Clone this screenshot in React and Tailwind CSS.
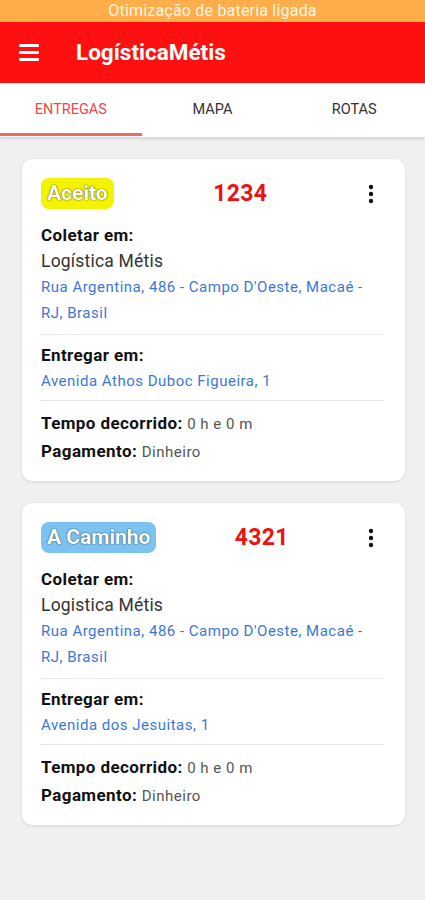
import React from "react";

const entregas = [
  {
    status: "Aceito",
    badge: "bg-[#f4f400]",
    numero: "1234",
    coletaNome: "Logística Métis",
    coletaEndereco: "Rua Argentina, 486 - Campo D'Oeste, Macaé - RJ, Brasil",
    entregaEndereco: "Avenida Athos Duboc Figueira, 1",
  },
  {
    status: "A Caminho",
    badge: "bg-[#7cc3f2]",
    numero: "4321",
    coletaNome: "Logistica Métis",
    coletaEndereco: "Rua Argentina, 486 - Campo D'Oeste, Macaé - RJ, Brasil",
    entregaEndereco: "Avenida dos Jesuitas, 1",
  },
];

const Kebab = () => (
  <svg width="8" height="20" viewBox="0 0 8 20" className="shrink-0">
    <circle cx="4" cy="3" r="2.2" fill="#111" />
    <circle cx="4" cy="10" r="2.2" fill="#111" />
    <circle cx="4" cy="17" r="2.2" fill="#111" />
  </svg>
);

const EntregaCard = ({ item }) => {
  return (
    <div className="bg-white rounded-[10px] shadow-[0_1px_3px_rgba(0,0,0,0.12)] pl-[19px] pr-[21px] pt-[19px] pb-[15px]">
      <div className="flex items-center justify-between pr-[9px] h-[31px]">
        <span
          className={`${item.badge} rounded-[8px] h-[31px] px-[6px] flex items-center text-white font-bold text-[21px] leading-none [text-shadow:0_0_1px_rgba(0,0,0,0.7),0_0_2px_rgba(0,0,0,0.4)]`}
        >
          {item.status}
        </span>
        <span className="text-[#ee1111] font-bold text-[23px] leading-none tracking-[0.3px]">
          {item.numero}
        </span>
        <Kebab />
      </div>

      <div className="mt-[13px] text-[17px] leading-[26px] font-bold tracking-[0.4px] text-[#111]">
        Coletar em:
      </div>
      <div className="text-[17.5px] leading-[26px] tracking-[0.2px] text-[#333]">
        {item.coletaNome}
      </div>
      <div className="text-[15px] leading-[26px] tracking-[0.5px] text-[#3b78d6] pr-[16px]">
        {item.coletaEndereco}
      </div>

      <div className="mt-[8px] h-px bg-[#e6e6e6]" />

      <div className="mt-[7px] text-[17px] leading-[26px] font-bold tracking-[0.4px] text-[#111]">
        Entregar em:
      </div>
      <div className="text-[15px] leading-[26px] tracking-[0.5px] text-[#3b78d6]">
        {item.entregaEndereco}
      </div>

      <div className="mt-[6px] h-px bg-[#e6e6e6]" />

      <div className="mt-[9px] leading-[27px] text-[#111]">
        <span className="text-[17px] font-bold tracking-[0.4px]">Tempo decorrido: </span>
        <span className="text-[15px] tracking-[0.5px] text-[#555]">0 h e 0 m</span>
      </div>
      <div className="leading-[27px] text-[#111]">
        <span className="text-[17px] font-bold tracking-[0.4px]">Pagamento: </span>
        <span className="text-[15px] tracking-[0.5px] text-[#555]">Dinheiro</span>
      </div>
    </div>
  );
};

const App = () => {
  const tabs = ["ENTREGAS", "MAPA", "ROTAS"];

  return (
    <div className="min-h-[900px] bg-[#f0f0f0] font-['Roboto',sans-serif]">
      <div className="h-[22px] bg-[#fdae4b] flex items-center justify-center text-[16px] tracking-[0.2px] text-[#fff5e0]">
        Otimização de bateria ligada
      </div>

      <div className="h-[61px] bg-[#fe1010] flex items-center">
        <div className="w-[76px] pl-[19px]">
          <div className="w-[20px] flex flex-col gap-[4px]">
            <span className="h-[3px] bg-white rounded-[1px]" />
            <span className="h-[3px] bg-white rounded-[1px]" />
            <span className="h-[3px] bg-white rounded-[1px]" />
          </div>
        </div>
        <h1 className="text-white text-[22.5px] font-bold">LogísticaMétis</h1>
      </div>

      <div className="h-[54px] bg-white flex shadow-[0_2px_3px_rgba(0,0,0,0.12)]">
        {tabs.map((tab, index) => (
          <div
            key={tab}
            className={`flex-1 flex items-center justify-center text-[14.5px] relative ${
              index === 0 ? "text-[#e84a4a]" : "text-[#333]"
            }`}
          >
            {tab}
            {index === 0 ? (
              <span className="absolute left-0 right-0 bottom-[1px] h-[3px] bg-[#f06a6a]" />
            ) : null}
          </div>
        ))}
      </div>

      <div className="pt-[22px] pl-[22px] pr-[20px] flex flex-col gap-[22px]">
        {entregas.map((item) => (
          <EntregaCard item={item} key={item.numero} />
        ))}
      </div>
    </div>
  );
};

export default App;
